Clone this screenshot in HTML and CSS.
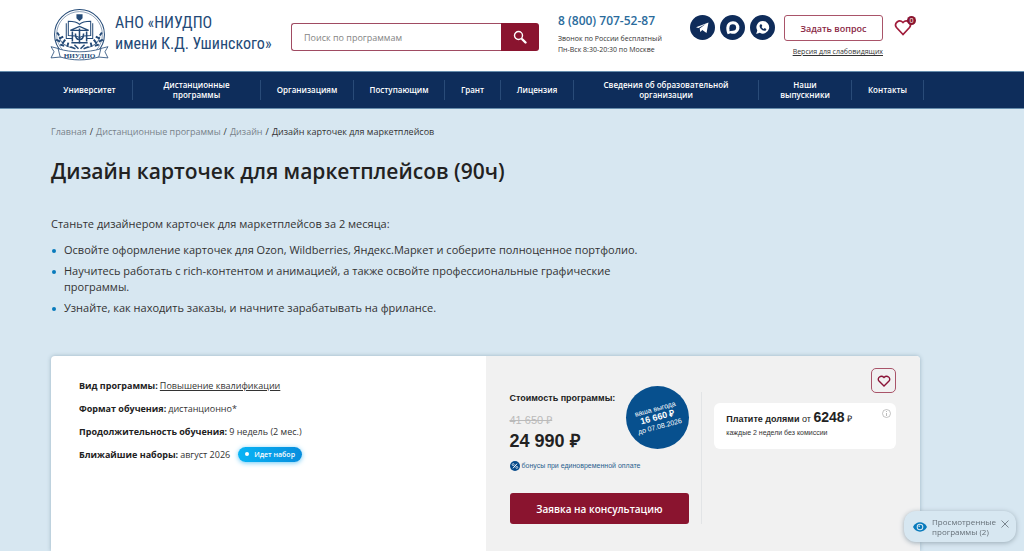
FILE: index.html
```html
<!DOCTYPE html>
<html lang="ru">
<head>
<meta charset="utf-8">
<meta name="viewport" content="width=device-width, initial-scale=1">
<title>Дизайн карточек для маркетплейсов (90ч)</title>
<link rel="stylesheet" href="styles.css">
</head>
<body>
<header class="header">
  <a class="logo" href="#">
    <svg class="logo-mark" viewBox="0 0 58 52" aria-hidden="true" fill="none" stroke="#244a77">
      <circle cx="29" cy="26" r="24.500" stroke-width="1"/>
      <circle cx="29" cy="26" r="22.500" stroke-width=".5"/>
      <path d="M26 6h6v4l-3 3-3-3z" fill="#244a77" stroke="none"/>
      <path d="M29 16c-3-3-7-3-11-3v14c4 0 8 0 11 2 3-2 7-2 11-2V13c-4 0-8 0-11 3zM16 15v15h6M42 15v15h-6" stroke-width="1"/>
      <path d="M20 22l9-4 9 4z" fill="#fff" stroke-width="1.200"/>
      <path d="M22 23v10M36 23v10M29 20v15M25 25c0 8 8 8 8 0M21 34h16" stroke-width="1.500"/>
      <path d="M9 27l-2-3M9 30l4-2M10 33l-4-2M12 35l3-4M14 37l-4-1M17 38l1-4M49 27l2-3M49 30l-4-2M48 33l4-2M46 35l-3-4M44 37l4-1M41 38l-1-4" stroke-width="1.900"/>
      <path d="M9 28c1 5 5 9 12 11M49 28c-1 5-5 9-12 11" stroke-width=".8"/>
      <path d="M20 38l5 2M24 36l4 4M38 38l-5 2M34 36l-4 4" stroke-width="1.500"/>
      <path d="M9 40L1 38l3 5-3 6 11-1M49 40l8-2-3 5 3 6-11-1" fill="#fff" stroke-width=".8"/>
      <path d="M8 40c13 4 29 4 42 0l-2 8c-12 4-26 4-38 0z" fill="#fff" stroke-width=".8"/>
      <text class="logo-ribbon" x="29" y="49" text-anchor="middle">НИУДПО</text>
    </svg>
    <span class="logo-text">АНО «НИУДПО<br>имени К.Д. Ушинского»</span>
  </a>
  <form class="search">
    <input class="search-input" type="text" placeholder="Поиск по программам" aria-label="Поиск по программам">
    <button class="search-button" type="button" aria-label="Найти">
      <svg width="14" height="14" viewBox="0 0 14 14" fill="none" stroke="#fff"><circle cx="5.500" cy="5.500" r="4" stroke-width="1.400"/><path d="M8.500 8.500l1 1" stroke-width="1.400"/><path d="M9.500 9.500l3 3" stroke-width="2.400" stroke-linecap="round"/></svg>
    </button>
  </form>
  <div class="contacts">
    <a class="phone" href="tel:88007075287">8 (800) 707-52-87</a>
    <span class="contacts-note">Звонок по России бесплатный<br>Пн-Вск 8:30-20:30 по Москве</span>
  </div>
  <div class="socials">
    <a href="#" aria-label="Telegram"><svg viewBox="0 0 25 25"><circle cx="12.500" cy="12.500" r="12.500" fill="#0f2c5a"/><path d="M6 12.300L18.500 7.500 16.500 18l-4.200-3-2 2-.6-3.600 6-4.400-7.300 4z" fill="#fff"/></svg></a>
    <a href="#" aria-label="MAX"><svg viewBox="0 0 25 25"><circle cx="12.500" cy="12.500" r="12.500" fill="#0f2c5a"/><path d="M13 6.200a6.300 6.300 0 1 1-2.500 12l-2.800 1c-1-1.800-1.400-4.400-1.400-6.500A6.500 6.500 0 0 1 13 6.200z" fill="#fff"/><circle cx="12.800" cy="12.500" r="3.300" fill="#0f2c5a"/><path d="M9.500 12.500v3.800l3.300-.7z" fill="#0f2c5a"/></svg></a>
    <a href="#" aria-label="WhatsApp"><svg viewBox="0 0 25 25"><circle cx="12.500" cy="12.500" r="12.500" fill="#0f2c5a"/><path d="M12.800 6a6.300 6.300 0 1 1-3 11.800L6.200 19l1.100-3.500A6.300 6.300 0 0 1 12.800 6z" fill="#fff"/><path d="M10.700 9.200l1 .2.600 1.600-.8.900c.5 1 1.200 1.700 2.300 2.200l.8-1 1.700.8c.2 1-.7 1.900-1.800 1.900-2.200 0-4.900-2.700-4.900-4.800 0-.8.500-1.500 1.100-1.800z" fill="#0f2c5a"/></svg></a>
  </div>
  <div class="ask">
    <button class="ask-button" type="button">Задать вопрос</button>
    <a class="ask-link" href="#">Версия для слабовидящих</a>
  </div>
  <a class="favorites" href="#" aria-label="Избранное">
    <svg width="18" height="18" viewBox="0 0 18 18" fill="none" stroke="#a01b3a" stroke-width="1.700"><path d="M9 16.500L2.500 9.500C-.5 5.500 5 .500 9 4.500c4-4 9.500 1 6.500 5z"/></svg>
    <span class="favorites-count">0</span>
  </a>
</header>

<nav class="nav">
  <div class="nav-list">
    <a href="#">Университет</a>
    <a href="#">Дистанционные<br>программы</a>
    <a href="#">Организациям</a>
    <a href="#">Поступающим</a>
    <a href="#">Грант</a>
    <a href="#">Лицензия</a>
    <a href="#">Сведения об образовательной<br>организации</a>
    <a href="#">Наши<br>выпускники</a>
    <a href="#">Контакты</a>
  </div>
</nav>

<main class="main">
  <div class="breadcrumbs">
    <a href="#">Главная</a><span>/</span><a href="#">Дистанционные программы</a><span>/</span><a href="#">Дизайн</a><span>/</span><span>Дизайн карточек для маркетплейсов</span>
  </div>
  <h1 class="title">Дизайн карточек для маркетплейсов (90ч)</h1>
  <div class="intro">
    <p>Станьте дизайнером карточек для маркетплейсов за 2 месяца:</p>
    <ul>
      <li>Освойте оформление карточек для Ozon, Wildberries, Яндекс.Маркет и соберите полноценное портфолио.</li>
      <li>Научитесь работать с rich-контентом и анимацией, а также освойте профессиональные графические программы.</li>
      <li>Узнайте, как находить заказы, и начните зарабатывать на фрилансе.</li>
    </ul>
  </div>

  <section class="card">
    <div class="details">
      <p><b>Вид программы:</b> <a href="#">Повышение квалификации</a></p>
      <p><b>Формат обучения:</b> дистанционно*</p>
      <p><b>Продолжительность обучения:</b> 9 недель (2 мес.)</p>
      <p><b>Ближайшие наборы:</b> август 2026 <span class="status">Идет набор</span></p>
    </div>
    <div class="offer">
      <div class="price">
        <div class="price-top">
          <div class="price-values">
            <span class="price-label">Стоимость программы:</span>
            <s class="price-old">41 650 ₽</s>
            <strong class="price-new">24 990 ₽</strong>
          </div>
          <div class="benefit"><div class="benefit-text">ваша выгода<br><b>16 660 ₽</b><br>до 07.08.2026</div></div>
        </div>
        <div class="bonus">
          <svg width="10" height="10" viewBox="0 0 10 10" aria-hidden="true"><circle cx="5" cy="5" r="5" fill="#074b8a"/><path d="M3 7.300l4-4.600" stroke="#fff"/><circle cx="3.200" cy="3.600" r="1" fill="none" stroke="#fff" stroke-width=".7"/><circle cx="6.800" cy="6.400" r="1" fill="none" stroke="#fff" stroke-width=".7"/></svg>
          <span>бонусы при единовременной оплате</span>
        </div>
        <button class="apply" type="button">Заявка на консультацию</button>
      </div>
      <div class="installments">
        <button class="like" type="button" aria-label="В избранное">
          <svg width="14" height="12" viewBox="0 0 14 12" fill="none" stroke="#8a1538" stroke-width="1.400"><path d="M7 11L2 6C-.5 3 4-.5 7 2.500 10-.5 14.500 3 12 6z"/></svg>
        </button>
        <div class="plan">
          <div>
            <div class="plan-main"><b>Платите долями</b> от <b class="plan-sum">6248</b> ₽</div>
            <div class="plan-note">каждые 2 недели без комиссии</div>
          </div>
          <svg width="9" height="9" viewBox="0 0 9 9" fill="none" stroke="#a9a9a9" aria-hidden="true"><circle cx="4.500" cy="4.500" r="4" stroke-width=".7"/><path d="M4.500 4v3M4.500 2v1" stroke-width=".8"/></svg>
        </div>
      </div>
    </div>
  </section>
</main>

<aside class="viewed">
  <svg width="14" height="10" viewBox="0 0 14 10" aria-hidden="true"><path d="M0 5C3-1.200 11-1.200 14 5 11 11.200 3 11.200 0 5z" fill="#087abc"/><circle cx="7" cy="5" r="3.300" fill="#d7e7f1"/><circle cx="7" cy="5" r="2.300" fill="#087abc"/><circle cx="6.200" cy="4.200" r=".8" fill="#d7e7f1"/></svg>
  <a href="#">Просмотренные<br>программы (2)</a>
  <button type="button" aria-label="Закрыть"><svg width="8" height="8" viewBox="0 0 8 8" stroke="#6f7b83" stroke-width=".9"><path d="M.5.5l7 7M7.500.5l-7 7"/></svg></button>
</aside>
</body>
</html>
```
FILE: styles.css
```css
* { box-sizing: border-box; }
body {
  margin: 0;
  min-height: 100vh;
  background: #d7e7f1;
  color: #333;
  font-family: "Open Sans", "Noto Sans", sans-serif;
  font-size: 9px;
}
a { color: inherit; text-decoration: none; }
button { font: inherit; padding: 0; cursor: pointer; }
svg { display: block; flex: none; }

.header {
  display: flex;
  align-items: flex-start;
  height: 71px;
  padding: 0 108px 0 50px;
  background: #fff;
}
.logo { display: flex; gap: 6px; width: 241px; padding-top: 8px; flex: none; }
.logo-mark { width: 59px; height: 53px; }
.logo-ribbon { font: bold 7px "Liberation Serif", serif; fill: #244a77; stroke: none; }
.logo-text {
  padding-top: 4px;
  color: #244a77;
  font: 16px/21px "Roboto Condensed", "Liberation Sans Narrow", "Open Sans", sans-serif;
  white-space: nowrap;
}
.search { display: flex; flex: 1; height: 28px; margin-top: 23px; }
.search-input {
  flex: 1;
  min-width: 0;
  padding: 0 12px;
  border: 1px solid #a04b62;
  border-right: 0;
  border-radius: 3px 0 0 3px;
  font: 9px "Open Sans", sans-serif;
  color: #333;
}
.search-input::placeholder { color: #858585; opacity: 1; }
.search-button {
  display: grid;
  place-items: center;
  width: 38px;
  border: 0;
  border-radius: 0 3px 3px 0;
  background: #8a142f;
}
.contacts { display: flex; flex-direction: column; width: 132px; margin-left: 19px; padding-top: 12px; }
.phone { color: #2a6b9c; font-size: 12px; line-height: 18px; font-weight: 600; }
.contacts-note { padding-top: 3px; font-size: 7px; line-height: 11px; white-space: nowrap; }
.socials { display: flex; gap: 5px; padding-top: 15px; }
.socials svg { width: 25px; height: 25px; }
.ask { display: flex; flex-direction: column; align-items: flex-end; width: 99px; margin-left: 9px; padding-top: 15px; }
.ask-button {
  width: 100%;
  height: 26px;
  border: 1px solid #a95469;
  border-radius: 3px;
  background: #fff;
  color: #8a2744;
  font-size: 9px;
  font-weight: 600;
}
.ask-link { padding-top: 6px; font-size: 7px; line-height: 10px; text-decoration: underline; white-space: nowrap; }
.favorites { position: relative; width: 22px; margin-left: 11px; padding-top: 18px; }
.favorites-count {
  position: absolute;
  top: 16px;
  right: 0;
  width: 9px;
  border-radius: 50%;
  background: #8a142f;
  color: #fff;
  font-size: 7px;
  line-height: 9px;
  text-align: center;
}

.nav { padding: 0 100px 0 47px; border: 1px solid #668dad; border-width: 1px 0; background: #0e2d5b; }
.nav-list {
  display: grid;
  grid-template-columns: 86fr 128fr 93fr 91fr 56fr 73fr 185fr 93fr 72fr;
  padding: 8px 0;
}
.nav-list a {
  display: grid;
  place-items: center;
  height: 20px;
  border-right: 1px solid #294b78;
  color: #fff;
  font-size: 8px;
  line-height: 10px;
  font-weight: 600;
  text-align: center;
  white-space: nowrap;
}

.main { padding: 16px 104px 0 51px; }
.breadcrumbs { display: flex; gap: 3px; line-height: 14px; }
.breadcrumbs a { color: #77828a; }
.title { margin: 17px 0 0; color: #222; font-size: 21px; line-height: 30px; font-weight: 600; }
.intro { max-width: 600px; margin-top: 30px; font-size: 11px; line-height: 16px; }
.intro p { margin: 0 0 10px; }
.intro ul { margin: 0; padding: 0; list-style: none; }
.intro li { position: relative; margin-bottom: 5px; padding-left: 13px; }
.intro li::before {
  content: "";
  position: absolute;
  top: 7px;
  left: 1px;
  width: 4px;
  height: 4px;
  border-radius: 50%;
  background: #087abc;
}

.card {
  display: grid;
  grid-template-columns: 1fr 1fr;
  min-height: 195px;
  margin-top: 40px;
  border-radius: 4px 4px 0 0;
  background: #fff;
  box-shadow: 0 0 4px #9cb3c2;
  overflow: hidden;
}
.details { padding: 21px 28px 0; color: #333; }
.details p { display: flex; align-items: center; gap: 2px; height: 16px; margin: 0 0 7px; }
.details b { color: #222; }
.details a { text-decoration: underline; }
.status {
  display: flex;
  align-items: center;
  gap: 5px;
  height: 15px;
  margin-left: 6px;
  padding: 0 7px;
  border-radius: 8px;
  background: linear-gradient(90deg, #08b4f5, #078ddd);
  box-shadow: 0 1px 5px #6cc9f5;
  color: #fff;
  font-size: 7px;
  font-weight: 600;
}
.status::before { content: ""; width: 4px; height: 4px; border-radius: 50%; background: #fff; }

.offer {
  display: grid;
  grid-template-columns: 193fr 218fr;
  padding-left: 24px;
  background: #f1f1f1;
  font-family: "Liberation Sans", Arial, sans-serif;
}
.price { height: 132px; margin-top: 36px; padding-right: 12px; border-right: 1px solid #e2e4e6; }
.price-top { display: flex; justify-content: space-between; height: 62px; margin-top: -6px; }
.price-values { display: flex; flex-direction: column; padding-top: 6px; white-space: nowrap; }
.price-label { color: #222; font-size: 9px; line-height: 12px; font-weight: 700; }
.price-old { padding-top: 9px; color: #bababa; font-size: 11px; line-height: 14px; }
.price-new { color: #222; font-size: 18px; line-height: 28px; }
.benefit {
  display: grid;
  place-items: center;
  flex: none;
  width: 63px;
  height: 63px;
  border-radius: 50%;
  background: #07508e;
  color: #fff;
  font-size: 7px;
  line-height: 9px;
  text-align: center;
}
.benefit-text { transform: rotate(-15deg); white-space: nowrap; }
.benefit b { font-size: 9px; }
.bonus { display: flex; align-items: center; gap: 2px; margin-top: 13px; color: #2a5f8f; font-size: 7px; line-height: 10px; white-space: nowrap; }
.apply {
  width: 100%;
  height: 31px;
  margin-top: 22px;
  border: 0;
  border-radius: 3px;
  background: #8a142f;
  color: #fff;
  font: 600 10px "Open Sans", sans-serif;
}
.installments { display: flex; flex-direction: column; align-items: flex-end; padding: 12px 24px 0 12px; }
.like {
  display: grid;
  place-items: center;
  width: 25px;
  height: 25px;
  border: 1px solid #a95469;
  border-radius: 5px;
  background: transparent;
}
.plan {
  display: flex;
  justify-content: space-between;
  width: 100%;
  height: 46px;
  margin-top: 10px;
  padding: 6px 5px 0 12px;
  border-radius: 6px;
  background: #fff;
  white-space: nowrap;
}
.plan-main { color: #222; font-size: 9px; line-height: 17px; }
.plan-sum { font-size: 14px; }
.plan-note { font-size: 7px; line-height: 10px; }

.viewed {
  position: fixed;
  right: 8px;
  bottom: 9px;
  display: flex;
  align-items: center;
  gap: 5px;
  height: 31px;
  padding: 0 7px 0 9px;
  border-radius: 12px;
  background: #d7e7f1;
  box-shadow: 0 1px 5px #9aaab5;
  color: #667078;
  font-size: 8px;
  line-height: 10px;
}
.viewed button { margin: 0 0 5px; border: 0; background: none; }
```
